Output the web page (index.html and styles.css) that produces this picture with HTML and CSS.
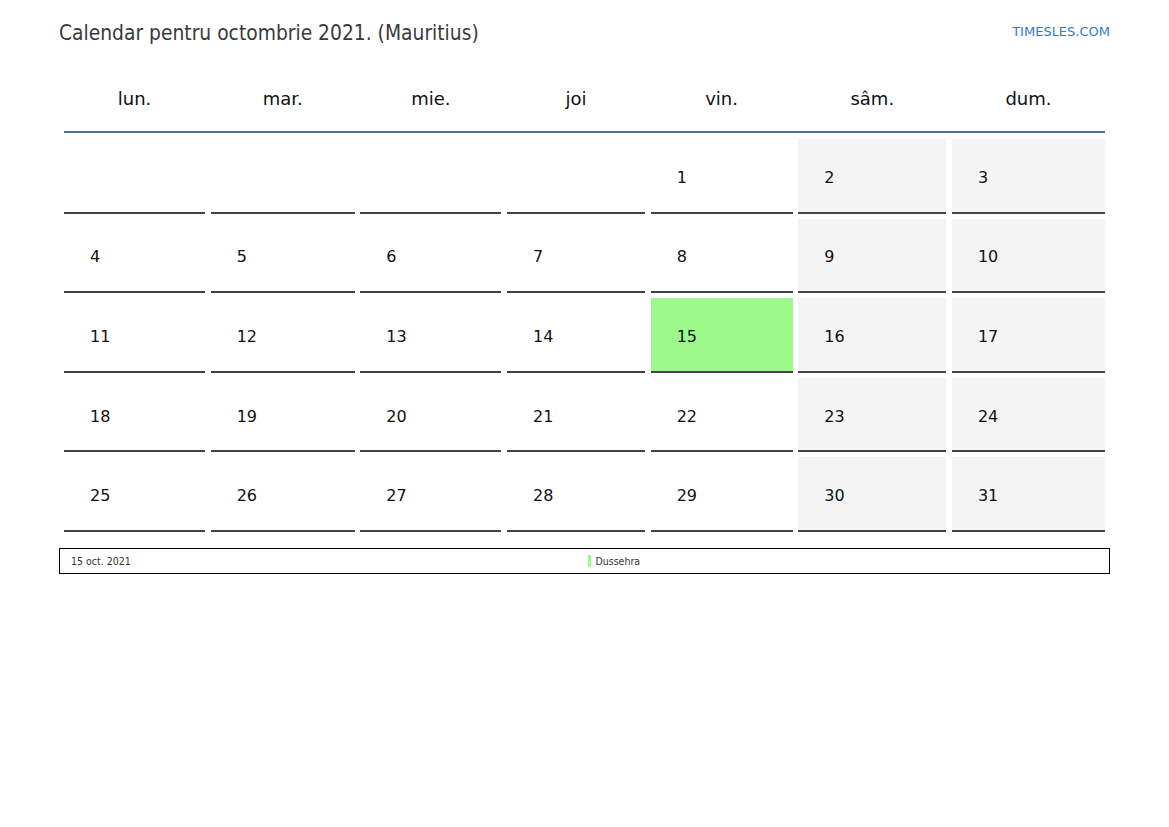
FILE: index.html
```html
<!DOCTYPE html>
<html lang="ro">
<head>
<meta charset="utf-8">
<title>Calendar pentru octombrie 2021. (Mauritius)</title>
<link rel="stylesheet" href="styles.css">
</head>
<body>
<div class="page">
  <div class="top">
    <h1 class="title">Calendar pentru octombrie 2021. (Mauritius)</h1>
    <a class="brand" href="#">TIMESLES.COM</a>
  </div>
  <div class="cal">
    <div class="grid head">
      <div class="hd">lun.</div>
      <div class="hd">mar.</div>
      <div class="hd">mie.</div>
      <div class="hd">joi</div>
      <div class="hd">vin.</div>
      <div class="hd">sâm.</div>
      <div class="hd">dum.</div>
    </div>
    <div class="grid body">
      <div class="day"></div>
      <div class="day"></div>
      <div class="day"></div>
      <div class="day"></div>
      <div class="day">1</div>
      <div class="day we">2</div>
      <div class="day we">3</div>

      <div class="day">4</div>
      <div class="day">5</div>
      <div class="day">6</div>
      <div class="day">7</div>
      <div class="day">8</div>
      <div class="day we">9</div>
      <div class="day we">10</div>

      <div class="day">11</div>
      <div class="day">12</div>
      <div class="day">13</div>
      <div class="day">14</div>
      <div class="day hol">15</div>
      <div class="day we">16</div>
      <div class="day we">17</div>

      <div class="day">18</div>
      <div class="day">19</div>
      <div class="day">20</div>
      <div class="day">21</div>
      <div class="day">22</div>
      <div class="day we">23</div>
      <div class="day we">24</div>

      <div class="day">25</div>
      <div class="day">26</div>
      <div class="day">27</div>
      <div class="day">28</div>
      <div class="day">29</div>
      <div class="day we">30</div>
      <div class="day we">31</div>
    </div>
  </div>
  <div class="legend">
    <div class="lg-date">15 oct. 2021</div>
    <div class="lg-name"><span class="mark"></span>Dussehra</div>
  </div>
</div>
</body>
</html>
```
FILE: styles.css
```css
html, body {
  margin: 0;
  padding: 0;
  background: #ffffff;
}
body {
  font-family: "DejaVu Sans", "Liberation Sans", sans-serif;
  color: #000;
}
.page {
  width: 1051px;
  padding: 21px 0 0 59px;
}
.top {
  display: flex;
  justify-content: space-between;
  align-items: center;
  height: 24px;
}
.title {
  margin: 0;
  font-family: "DejaVu Sans Condensed", "DejaVu Sans", sans-serif;
  font-size: 20.8px;
  font-weight: normal;
  color: #3a3a3a;
  line-height: 24px;
}
.brand {
  font-size: 13px;
  color: #2f7bc6;
  text-decoration: none;
  line-height: 24px;
  margin-top: -2px;
}
.cal {
  margin: 23px 5px 0 5px;
}
.grid {
  display: grid;
  grid-template-columns: 141px 144px 141px 138px 142px 148px 153px;
  column-gap: 5.67px;
}
.head {
  border-bottom: 2px solid #4e6d98;
  height: 63px;
}
.hd {
  display: flex;
  align-items: center;
  justify-content: center;
  font-size: 18px;
  color: #111;
  padding-bottom: 2px;
}
.body {
  margin-top: 6px;
  grid-auto-rows: 74.6px;
  row-gap: 5px;
}
.day {
  display: flex;
  align-items: center;
  padding-left: 26px;
  font-size: 16px;
  color: #111;
  border-bottom: 2px solid #444;
  box-sizing: border-box;
  padding-top: 4px;
}
.we {
  background: #f4f4f4;
}
.hol {
  background: #9cfa8a;
}
.legend {
  display: grid;
  grid-template-columns: 1fr 1fr;
  margin-top: 16px;
  border: 1px solid #000;
  height: 24px;
  font-family: "DejaVu Sans Condensed", "DejaVu Sans", sans-serif;
  font-size: 10.5px;
  color: #333;
}
.lg-date {
  display: flex;
  align-items: center;
  padding-left: 11px;
}
.lg-name {
  display: flex;
  align-items: center;
  padding-left: 3px;
}
.mark {
  width: 3px;
  height: 12px;
  background: #9cfa8a;
  margin-right: 5px;
}
```
